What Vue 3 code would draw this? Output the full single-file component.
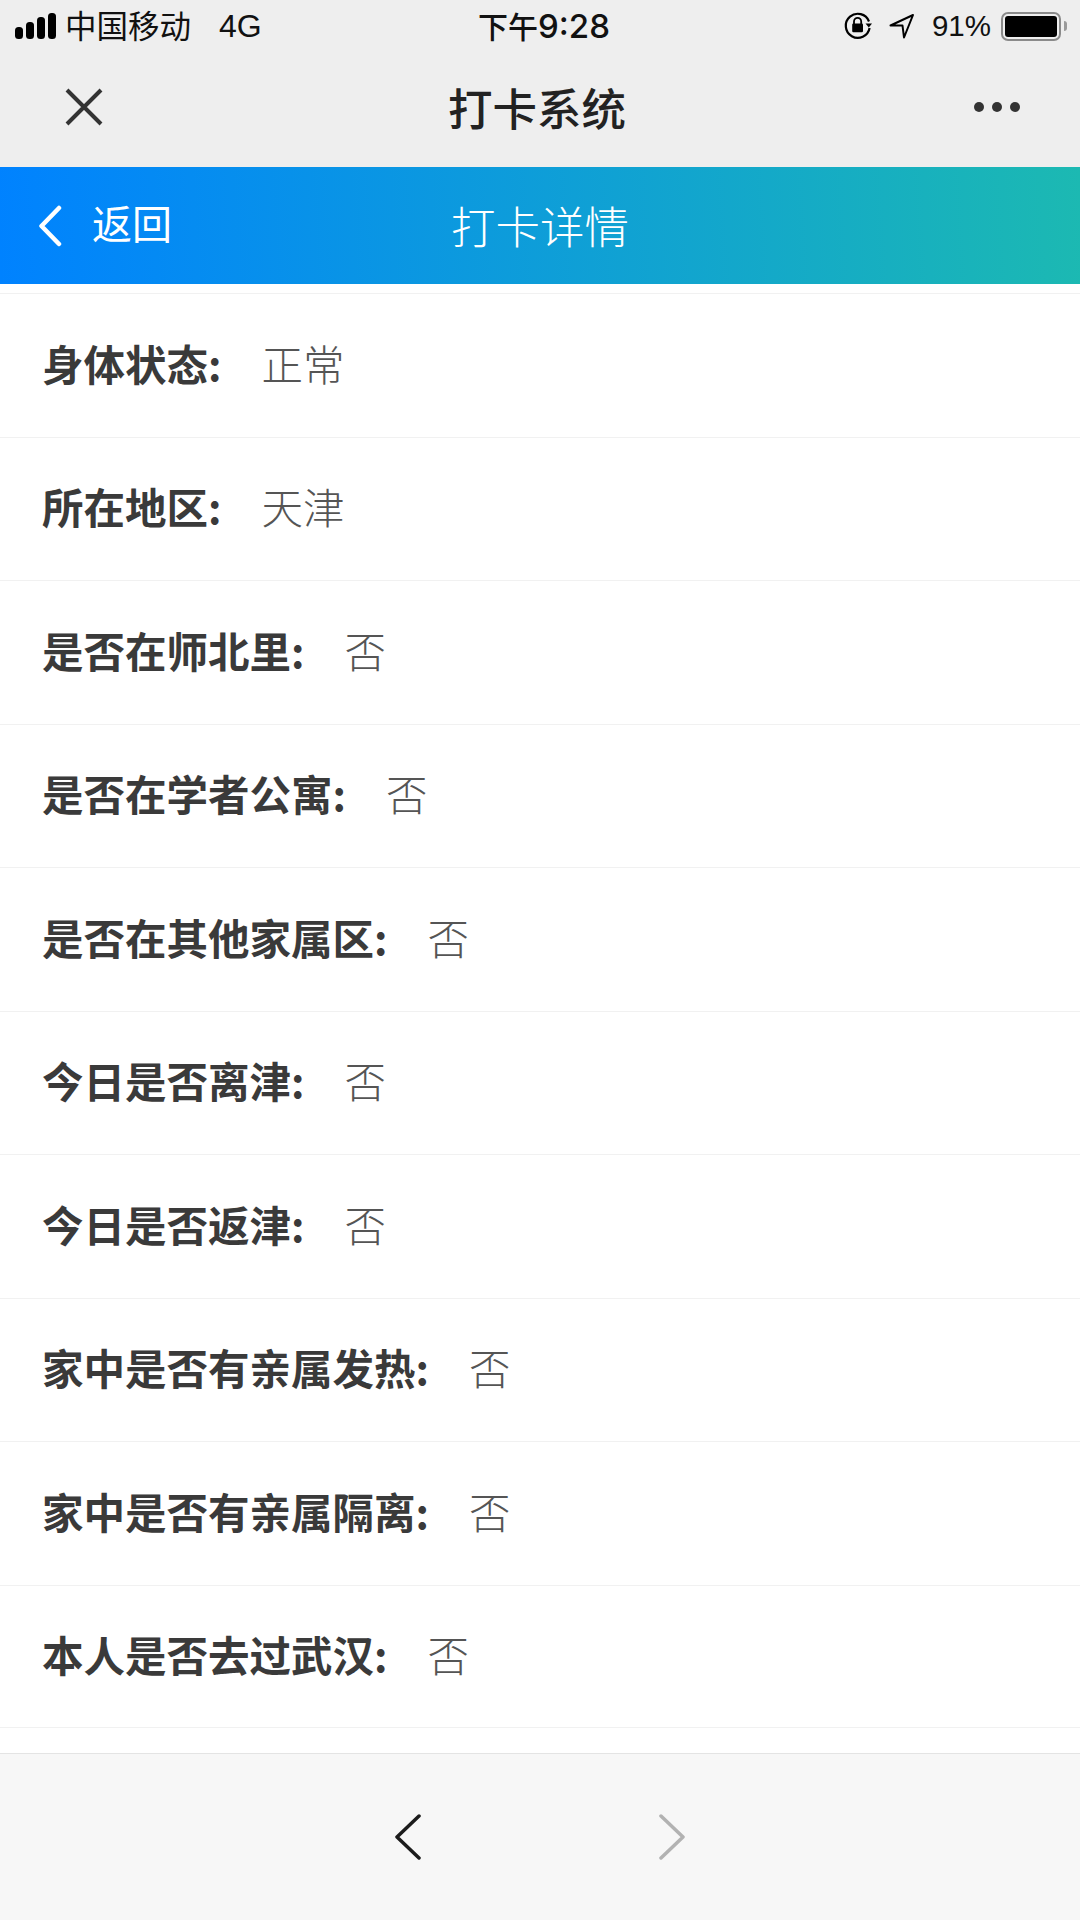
<script setup>
// rows of the check-in detail page
const rows = [
  { label: '身体状态:', value: '正常' },
  { label: '所在地区:', value: '天津' },
  { label: '是否在师北里:', value: '否' },
  { label: '是否在学者公寓:', value: '否' },
  { label: '是否在其他家属区:', value: '否' },
  { label: '今日是否离津:', value: '否' },
  { label: '今日是否返津:', value: '否' },
  { label: '家中是否有亲属发热:', value: '否' },
  { label: '家中是否有亲属隔离:', value: '否' },
  { label: '本人是否去过武汉:', value: '否' },
]
</script>

<template>
  <div class="phone">
    <div class="wechat-top">
      <div class="status">
        <div class="status-left">
          <svg class="signal" width="42" height="28" viewBox="0 0 42 28">
            <rect x="0" y="15" width="8" height="12" rx="3.5" />
            <rect x="11" y="10" width="8" height="17" rx="3.5" />
            <rect x="22" y="5" width="8" height="22" rx="3.5" />
            <rect x="33" y="1" width="8" height="26" rx="3.5" />
          </svg>
          <span class="carrier">中国移动</span>
          <span class="net">4G</span>
        </div>
        <div class="time">下午<span class="digits">9:28</span></div>
        <div class="status-right">
          <svg class="lock" width="30" height="30" viewBox="0 0 30 30">
            <path d="M26 10.5A12 12 0 1 0 26.6 17" fill="none" stroke="#000" stroke-width="2.2" />
            <path d="M22.5 12.5h6.5l-3.2 4z" fill="#000" />
            <path d="M11 13v-2.6a3.6 3.6 0 0 1 7.2 0V13" fill="none" stroke="#000" stroke-width="1.8" />
            <rect x="9.2" y="12.6" width="10.8" height="8.6" rx="1.2" fill="#000" />
          </svg>
          <svg class="arrow" width="26" height="26" viewBox="0 0 26 26">
            <path d="M1.5 12.5 24 2 15 24.5 13.5 12.5z" fill="none" stroke="#000" stroke-width="2" stroke-linejoin="round" />
          </svg>
          <span class="percent">91%</span>
          <div class="battery"><div class="battery-fill"></div></div>
          <div class="battery-cap"></div>
        </div>
      </div>
      <div class="wx-nav">
        <svg class="close" width="38" height="38" viewBox="0 0 38 38">
          <path d="M2 2 36 36M36 2 2 36" stroke="#333" stroke-width="4" fill="none" />
        </svg>
        <div class="wx-title">打卡系统</div>
        <div class="more">
          <i></i><i></i><i></i>
        </div>
      </div>
    </div>

    <div class="app-bar">
      <div class="back">
        <svg width="26" height="42" viewBox="0 0 26 42">
          <path d="M23 3 5.500 21 23 39" stroke="#fff" stroke-width="4.500" stroke-linecap="round" stroke-linejoin="round" fill="none" />
        </svg>
        <span class="back-text">返回</span>
      </div>
      <div class="app-title">打卡详情</div>
    </div>

    <div class="list">
      <div v-for="row in rows" :key="row.label" class="row">
        <span class="label">{{ row.label }}</span>
        <span class="value">{{ row.value }}</span>
      </div>
    </div>

    <div class="bottom">
      <svg width="26" height="46" viewBox="0 0 26 46">
        <path d="M24 2 2 23 24 44" stroke="#1c1c1c" stroke-width="3.500" stroke-linecap="round" stroke-linejoin="round" fill="none" />
      </svg>
      <svg width="26" height="46" viewBox="0 0 26 46">
        <path d="M2 2 24 23 2 44" stroke="#b2b2b2" stroke-width="3.500" stroke-linecap="round" stroke-linejoin="round" fill="none" />
      </svg>
    </div>
  </div>
</template>

<style>
html, body {
  margin: 0;
  background: #fff;
}
</style>

<style scoped>
.phone {
  width: 1080px;
  height: 1920px;
  display: flex;
  flex-direction: column;
  overflow: hidden;
  font-family: "Liberation Sans", "Noto Sans CJK SC", sans-serif;
  background: #fff;
}

.wechat-top {
  height: 167px;
  background: #eeeeee;
  display: flex;
  flex-direction: column;
}

.status {
  height: 52px;
  display: flex;
  align-items: center;
  justify-content: space-between;
  padding: 0 13px 0 15px;
  position: relative;
  font-size: 30px;
  color: #111;
}

.status-left {
  display: flex;
  align-items: center;
}

.signal {
  fill: #000;
}

.carrier {
  margin-left: 8px;
  font-family: "Noto Sans CJK SC", sans-serif;
  font-size: 31.500px;
  line-height: 44px;
  margin-bottom: 4px;
}

.net {
  margin-left: 28px;
  font-size: 32px;
}

.time {
  position: absolute;
  left: 478px;
  top: 3px;
  font-family: "Noto Sans CJK SC", sans-serif;
  font-weight: 500;
  font-size: 30px;
  line-height: 44px;
}

.digits {
  font-family: Inter, "Liberation Sans", sans-serif;
  font-size: 33px;
  font-weight: 500;
}

.status-right {
  display: flex;
  align-items: center;
}

.arrow {
  margin-left: 16px;
}

.percent {
  margin-left: 17px;
  font-size: 29.500px;
}

.battery {
  margin-left: 10px;
  width: 60px;
  height: 29px;
  box-sizing: border-box;
  border: 2px solid #8a8a8a;
  border-radius: 7px;
  padding: 2px;
}

.battery-fill {
  width: 100%;
  height: 100%;
  background: #000;
  border-radius: 3px;
}

.battery-cap {
  width: 3px;
  height: 10px;
  margin-left: 3px;
  background: #9a9a9a;
  border-radius: 0 3px 3px 0;
}

.wx-nav {
  flex: 1;
  display: flex;
  align-items: center;
  justify-content: space-between;
  padding: 0 60px 5px 65px;
}

.wx-title {
  font-family: "Noto Sans CJK SC", sans-serif;
  font-size: 44.500px;
  font-weight: 500;
  color: #222;
  margin: 0 0 2px -3px;
}

.more {
  display: flex;
  gap: 8px;
}

.more i {
  width: 10px;
  height: 10px;
  border-radius: 50%;
  background: #333;
}

.app-bar {
  height: 117px;
  position: relative;
  display: flex;
  align-items: center;
  justify-content: center;
  background: linear-gradient(87deg, #0082ff 0%, #1cb9b2 100%);
  color: #fff;
  font-family: "Noto Sans CJK SC", sans-serif;
}

.back {
  position: absolute;
  left: 36px;
  top: 34px;
  display: flex;
  align-items: center;
  gap: 30px;
  font-size: 40px;
  line-height: 42px;
}

.back-text {
  margin-bottom: 7px;
}

.app-title {
  font-size: 44.500px;
  font-weight: 300;
  padding-bottom: 2px;
}

.list {
  flex: 1;
  padding-top: 9px;
  overflow: hidden;
}

.row {
  height: 143.500px;
  box-sizing: border-box;
  display: flex;
  align-items: center;
  padding: 0 0 5px 42px;
  border-top: 1.500px solid #f1f1f1;
  font-family: "Noto Sans CJK SC", sans-serif;
  font-size: 41.500px;
}

.label {
  font-weight: 700;
  color: #3a3a3a;
}

.value {
  margin-left: 40px;
  font-weight: 300;
  color: #555;
}

.row:last-child {
  border-bottom: 1.500px solid #f1f1f1;
}

.bottom {
  height: 167px;
  box-sizing: border-box;
  border-top: 1.500px solid #e4e4e4;
  background: #f7f7f7;
  display: flex;
  align-items: center;
  justify-content: center;
  gap: 238px;
}
</style>
